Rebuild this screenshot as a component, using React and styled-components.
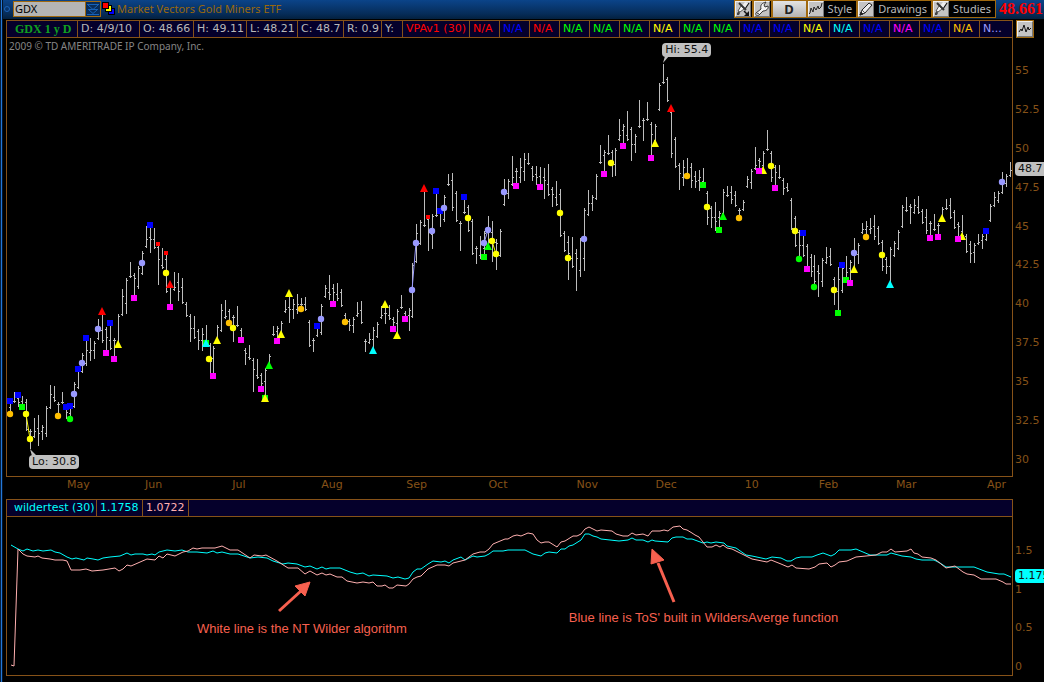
import styled, { createGlobalStyle } from 'styled-components';

const GlobalStyle = createGlobalStyle`
  * {
    box-sizing: border-box;
  }

  body {
    margin: 0;
    background: #000;
    font-family: 'DejaVu Sans', 'Noto Sans', sans-serif;
    font-size: 11px;
    line-height: 16px;
  }

  button, input {
    font: inherit;
  }
`;

const line = '#865218';
const frame = '#a0690f';
const narrow = "'Noto Sans', 'DejaVu Sans', sans-serif";

const Page = styled.div`
  min-height: 100vh;
  padding-left: 3px;
  overflow: hidden;
  background: linear-gradient(90deg, #06203f 1px, #2478d8 1px 2px, #03152c 2px 3px, #000 3px);
`;

const TopBar = styled.header`
  display: flex;
  align-items: flex-start;
  height: 20px;
  overflow: hidden;
  font-family: ${narrow};
  white-space: nowrap;
  background: linear-gradient(#0b4489, #062c58 14px, #03203f 19px, #000 19px);
`;

const LinkDot = styled.span`
  flex: none;
  width: 6px;
  height: 6px;
  margin: 6px 3px 0 1px;
  border: 1px solid #1c62b8;
  border-radius: 50%;
`;

const SymbolBox = styled.div`
  display: flex;
  flex: none;
  height: 16px;
  margin-top: 1px;
  border: 1px solid ${frame};
`;

const SymbolInput = styled.input`
  width: 71px;
  padding: 0 1px;
  border: 0;
  background: #b5b5b5;
  color: #000;
`;

const SymbolArrow = styled.button`
  display: flex;
  width: 15px;
  padding: 0;
  border: 0;
  border-left: 1px solid ${frame};
  background: #072c5a;
`;

const ColorSquares = styled.svg`
  flex: none;
  width: 13px;
  height: 13px;
  margin: 2px 2px 0 1px;
`;

const Company = styled.h1`
  flex: 1;
  margin: 0;
  padding-top: 1px;
  color: #99680c;
  font-size: 11px;
  font-weight: 400;
`;

const Tools = styled.nav`
  display: flex;
  flex: none;
`;

const ToolButton = styled.button`
  display: flex;
  align-items: center;
  gap: 4px;
  height: 18px;
  padding: 0 ${(props) => (props.$wide ? '4px' : '1px')} 0 0;
  border: 1px solid ${frame};
  background: #000;
  color: #b8b8b8;
`;

const PeriodButton = styled.button`
  width: 35px;
  height: 18px;
  padding: 0;
  border: 1px solid ${frame};
  background: linear-gradient(#e4e4e4, #b4b4b4);
  color: #222;
  font-size: 13px;
  font-weight: 700;
  line-height: 14px;
`;

const Price = styled.strong`
  flex: none;
  width: 48px;
  padding-left: 3px;
  color: #f00;
  font-family: 'Liberation Serif', serif;
  font-size: 16px;
  line-height: 18px;
`;

const Workspace = styled.main`
  display: grid;
  grid-template-columns: minmax(0, 1fr) 31px;
  padding-left: 3px;
`;

const Panel = styled.section`
  border: 1px solid ${line};
`;

const CellRow = styled.div`
  display: grid;
  grid-template-columns: ${(props) => props.$columns};
  height: 17px;
  border-bottom: 1px solid ${line};
  background: #05002b;
`;

const Cell = styled.span`
  padding-left: ${(props) => (props.$lead ? '7px' : '3px')};
  border-right: 1px solid ${(props) => (props.$last ? 'transparent' : line)};
  color: ${(props) => props.$color || '#b8b8b8'};
  line-height: 16px;
  white-space: nowrap;
`;

const SymbolCell = styled(Cell)`
  padding-left: 8px;
  color: #10a020;
  font-family: 'Liberation Serif', serif;
  font-size: 12px;
  font-weight: 700;
`;

const Plot = styled.div`
  position: relative;
  height: ${(props) => props.$height}px;
`;

const Drawing = styled.svg`
  display: block;
  width: 100%;
  height: 100%;
`;

const Copyright = styled.p`
  position: absolute;
  top: 0;
  left: 2px;
  margin: 0;
  color: #858585;
  font-family: ${narrow};
  font-size: 10px;
`;

const Bubble = styled.span`
  position: absolute;
  left: ${(props) => props.$left};
  top: ${(props) => props.$top}px;
  height: 14px;
  padding: 0 3px;
  border-radius: 4px;
  background: ${(props) => props.$fill || '#c0c0c0'};
  color: #111;
  line-height: 14px;
  white-space: nowrap;
`;

const Note = styled.p`
  position: absolute;
  left: ${(props) => props.$left};
  top: ${(props) => props.$top}px;
  margin: 0;
  color: #f7604f;
  font-family: 'Liberation Sans', Arial, sans-serif;
  font-size: 13px;
  white-space: nowrap;
`;

const Scale = styled.aside`
  position: relative;
  display: flex;
  flex-direction: column;
  justify-content: space-between;
  overflow: hidden;
  padding: ${(props) => props.$pad};
  color: ${line};
`;

const PriceTag = styled(Bubble)`
  padding-right: 8px;
  border-radius: 4px 0 0 4px;
`;

const PatternButton = styled.button`
  position: absolute;
  top: 0;
  left: 3px;
  display: flex;
  padding: 0;
  border: 1px solid ${frame};
  background: #000;
`;

const Months = styled.div`
  display: grid;
  grid-template-columns: 78fr 87fr 89fr 85fr 82fr 88fr 79fr 89fr 74fr 77fr 91fr 26fr;
  grid-column: 1 / -1;
  height: 22px;
  padding: 0 31px 0 61px;
  color: ${line};
`;

const quotes = ['D: 4/9/10', 'O: 48.66', 'H: 49.11', 'L: 48.21', 'C: 48.7', 'R: 0.9', 'Y:'];

const red = '#f00';
const blue = '#00f';
const green = '#0f0';
const yellow = '#ff0';
const cyan = '#0ff';
const magenta = '#f0f';
const orange = '#ffc000';
const violet = '#9999ff';

const signals = [
  red, blue, red, green, green, green, yellow, green, green,
  blue, blue, yellow, cyan, blue, magenta, blue, orange,
];

const months = ['May', 'Jun', 'Jul', 'Aug', 'Sep', 'Oct', 'Nov', 'Dec', '10', 'Feb', 'Mar', 'Apr'];
const prices = ['55', '52.5', '50', '47.5', '45', '42.5', '40', '37.5', '35', '32.5', '30'];
const ratios = ['1.5', '1', '0.5', '0'];

// high and low of each trading day, as heights on the chart
const days = [
  [401, 413], [392, 403], [395, 407], [396, 407], [399, 431], [429, 449], [418, 438], [415, 446],
  [425, 440], [406, 437], [385, 409], [386, 402], [402, 415], [392, 404], [407, 419], [405, 419],
  [382, 408], [369, 389], [353, 373], [338, 366], [338, 361], [341, 359], [319, 340], [313, 343],
  [327, 353], [323, 350], [338, 359], [314, 346], [289, 316], [278, 314], [262, 278], [273, 298],
  [266, 289], [251, 275], [226, 248], [225, 253], [228, 249], [245, 285], [248, 269], [253, 293],
  [285, 307], [272, 291], [273, 301], [278, 304], [302, 317], [314, 342], [316, 339], [329, 350],
  [328, 351], [325, 343], [343, 373], [346, 376], [325, 343], [304, 332], [300, 319], [309, 323],
  [315, 342], [306, 327], [328, 340], [348, 365], [345, 360], [358, 392], [359, 379], [373, 389],
  [368, 398], [354, 366], [326, 336], [326, 341], [321, 335], [300, 313], [295, 323], [299, 319],
  [294, 314], [298, 309], [297, 311], [320, 347], [338, 352], [326, 337], [304, 335], [285, 298],
  [275, 300], [284, 304], [283, 301], [289, 307], [313, 322], [319, 331], [317, 333], [302, 317],
  [301, 324], [339, 352], [333, 344], [327, 350], [322, 338], [306, 319], [305, 324], [305, 320],
  [317, 329], [309, 335], [295, 309], [311, 319], [308, 331], [263, 318], [224, 263], [220, 245],
  [190, 227], [217, 251], [214, 249], [191, 217], [210, 227], [195, 222], [174, 186], [173, 211],
  [191, 222], [221, 251], [197, 214], [205, 232], [219, 255], [246, 264], [236, 259], [231, 257],
  [216, 247], [221, 262], [239, 270], [229, 257], [179, 206], [179, 199], [156, 186], [168, 186],
  [158, 183], [153, 181], [153, 165], [166, 181], [166, 185], [167, 187], [168, 199], [164, 196],
  [187, 207], [181, 206], [189, 237], [231, 252], [236, 280], [237, 268], [249, 291], [238, 277],
  [208, 271], [190, 216], [195, 211], [174, 200], [145, 164], [150, 174], [135, 155], [150, 177],
  [148, 176], [119, 141], [124, 146], [111, 141], [127, 161], [134, 153], [100, 128], [118, 141],
  [102, 121], [122, 158], [124, 144], [83, 111], [64, 84], [77, 102], [110, 158], [137, 168],
  [163, 190], [160, 186], [158, 176], [163, 188], [171, 188], [170, 191], [168, 185], [191, 225],
  [206, 228], [202, 231], [211, 230], [189, 215], [186, 197], [186, 204], [191, 207], [208, 218],
  [200, 211], [176, 188], [169, 189], [147, 170], [158, 171], [151, 171], [130, 151], [151, 182],
  [165, 188], [165, 179], [178, 195], [183, 192], [198, 230], [216, 247], [230, 259], [233, 257],
  [244, 269], [254, 277], [255, 286], [265, 297], [258, 287], [247, 264], [248, 266], [277, 305],
  [267, 313], [265, 293], [256, 280], [260, 283], [238, 269], [243, 264], [223, 234], [221, 237],
  [218, 234], [215, 240], [226, 245], [240, 271], [257, 274], [247, 284], [241, 257], [230, 250],
  [205, 228], [197, 212], [204, 224], [199, 214], [196, 214], [209, 224], [209, 234], [221, 238],
  [214, 231], [223, 237], [207, 218], [199, 210], [198, 219], [210, 229], [222, 239], [215, 237],
  [234, 253], [241, 263], [243, 263], [234, 245], [234, 249], [231, 241], [204, 222], [192, 207],
  [191, 203], [172, 194], [174, 187], [162, 177],
];

const marks = [
  ['square', blue, 10, 401], ['circle', orange, 10, 414], ['square', blue, 18, 395],
  ['square', green, 22, 407], ['circle', yellow, 26, 414], ['circle', yellow, 30, 439],
  ['circle', orange, 58, 416], ['square', blue, 66, 407], ['square', blue, 70, 406],
  ['circle', green, 70, 419], ['circle', violet, 74, 394], ['square', blue, 78, 369],
  ['circle', violet, 82, 363], ['square', blue, 86, 338], ['circle', violet, 98, 329],
  ['triangle', red, 102, 311], ['square', magenta, 106, 353], ['square', blue, 110, 323],
  ['square', magenta, 114, 359], ['triangle', yellow, 118, 344], ['square', magenta, 134, 298],
  ['circle', violet, 142, 263], ['square', blue, 150, 225], ['dot', red, 158, 244],
  ['dot', red, 166, 253], ['circle', yellow, 166, 273], ['triangle', red, 170, 284],
  ['square', magenta, 170, 307], ['square', green, 206, 343], ['triangle', cyan, 206, 343],
  ['circle', yellow, 209, 359], ['square', magenta, 213, 376], ['triangle', yellow, 217, 340],
  ['circle', orange, 229, 323], ['circle', yellow, 233, 328], ['square', magenta, 241, 340],
  ['square', magenta, 261, 389], ['square', green, 265, 398], ['triangle', yellow, 265, 398],
  ['triangle', green, 269, 365], ['square', magenta, 277, 341], ['triangle', yellow, 281, 334],
  ['triangle', yellow, 289, 293], ['circle', orange, 301, 309], ['square', blue, 317, 326],
  ['circle', violet, 321, 319], ['square', magenta, 333, 304], ['circle', orange, 345, 322],
  ['triangle', cyan, 373, 350], ['triangle', yellow, 385, 304], ['square', magenta, 393, 329],
  ['triangle', yellow, 397, 335], ['square', magenta, 405, 319], ['circle', violet, 412, 290],
  ['circle', violet, 416, 243], ['triangle', red, 424, 188], ['dot', red, 428, 217],
  ['circle', violet, 432, 231], ['square', blue, 436, 191], ['square', blue, 440, 211],
  ['circle', violet, 444, 208], ['square', blue, 464, 197], ['circle', yellow, 468, 218],
  ['circle', violet, 484, 243], ['circle', violet, 488, 230], ['triangle', green, 488, 246],
  ['square', green, 484, 257], ['circle', yellow, 492, 241], ['circle', yellow, 496, 254],
  ['circle', violet, 504, 192], ['square', magenta, 516, 186], ['square', magenta, 540, 187],
  ['circle', yellow, 560, 213], ['circle', yellow, 568, 258], ['circle', violet, 584, 239],
  ['square', magenta, 604, 174], ['circle', yellow, 611, 163], ['square', magenta, 623, 146],
  ['square', magenta, 651, 158], ['triangle', yellow, 655, 143], ['triangle', red, 671, 108],
  ['circle', orange, 687, 176], ['square', green, 703, 185], ['circle', yellow, 707, 207],
  ['triangle', green, 723, 216], ['square', green, 719, 230], ['circle', orange, 739, 218],
  ['triangle', yellow, 763, 170], ['square', magenta, 759, 171], ['circle', yellow, 771, 166],
  ['square', magenta, 775, 188], ['circle', yellow, 795, 231], ['square', blue, 803, 233],
  ['circle', green, 799, 259], ['square', magenta, 807, 269], ['circle', green, 814, 287],
  ['circle', yellow, 834, 290], ['square', green, 838, 313], ['square', blue, 842, 265],
  ['square', green, 846, 280], ['square', magenta, 850, 283], ['circle', violet, 854, 253],
  ['triangle', yellow, 854, 269], ['circle', orange, 866, 237], ['circle', yellow, 882, 255],
  ['triangle', cyan, 890, 284], ['square', magenta, 930, 238], ['square', magenta, 938, 237],
  ['triangle', yellow, 942, 218], ['triangle', yellow, 962, 236], ['square', magenta, 958, 239],
  ['square', blue, 986, 231], ['circle', violet, 1002, 182],
];

const links = [
  [yellow, 26, 414, 30, 439],
  [violet, 412, 290, 416, 243],
  [violet, 484, 243, 488, 230],
  [yellow, 492, 241, 496, 254],
];

const wilders = `11,545 18,549 23,551 27,549 33,551 38,550 43,551 51,550 55,552 60,553 67,557 72,559 76,558
  80,559 84,560 87,558 93,559 98,560 103,558 110,557 120,556 127,553 131,555 135,554 143,554 147,555
  152,554 155,555 159,552 167,550 175,551 182,550 188,552 197,552 207,553 213,551 217,553 222,552
  230,554 238,554 250,558 258,557 267,558 273,561 283,564 288,563 297,564 305,567 310,566 317,569
  322,567 326,569 330,568 340,568 350,572 357,574 363,573 369,576 373,575 387,576 393,578 398,577
  405,579 409,578 413,572 417,569 421,569 428,564 433,561 441,562 445,561 449,563 453,560 461,557
  465,560 473,556 477,557 485,556 489,554 493,551 503,551 508,550 525,550 533,554 541,556 545,553
  549,552 557,553 561,549 565,549 569,546 573,545 581,540 585,534 589,534 593,536 597,537 601,539
  619,541 628,540 632,538 636,540 643,540 648,542 652,540 655,541 668,542 672,538 676,537 683,537
  687,539 692,539 703,543 707,542 711,543 716,542 724,543 727,546 736,548 746,555 752,556 766,559
  772,557 781,558 787,561 791,561 796,558 801,557 812,557 817,555 823,553 831,556 835,554 839,550
  851,550 856,549 870,555 882,555 887,555 891,553 902,556 911,557 916,559 922,560 934,560 940,563
  946,567 974,567 987,572 999,574 1004,574 1011,577`;

const ntWilder = `11,665 14,666 18,549 23,554 27,556 35,557 38,556 42,558 50,559 55,560 63,560 67,561 71,570
  80,570 86,569 92,571 103,570 115,568 119,571 123,569 127,565 131,566 147,559 155,560 159,556 163,558
  167,554 175,556 183,552 188,551 193,548 197,549 202,548 215,548 222,546 230,550 238,550 250,558
  254,555 262,556 266,555 277,561 288,568 298,568 305,574 310,571 317,575 322,573 326,575 330,574
  337,577 342,577 347,581 357,583 363,582 369,583 373,582 377,586 382,586 385,585 389,588 393,588
  397,585 406,586 409,584 413,579 417,577 421,576 428,569 437,565 445,565 449,566 453,563 465,560
  473,554 480,552 485,552 489,549 493,544 505,539 508,539 513,536 517,535 521,536 528,533 533,534
  537,540 541,543 545,542 549,542 557,547 561,542 565,541 573,536 577,536 581,534 585,529 589,527
  597,531 601,530 612,531 616,534 623,536 628,536 632,533 636,535 643,534 648,536 652,531 660,531
  664,530 668,531 673,527 680,526 683,529 687,530 692,533 695,535 699,537 707,547 712,547 716,545
  720,547 723,545 727,548 732,549 740,553 752,559 767,562 771,560 776,562 781,564 788,567 792,565
  796,568 809,569 815,567 819,564 827,563 831,567 835,565 839,562 847,561 856,557 876,555 882,552
  887,552 891,549 895,552 907,551 911,549 914,553 918,554 922,557 931,558 936,560 946,568 955,566
  959,569 963,572 967,574 974,575 981,579 996,579 1003,582 1006,584 1011,584`;

// the calendar loses one pixel about every fifty days
const dayX = (i) => 10 + 4 * i - Math.floor(i / 50.4);

const tickY = (day, neighbour) => {
  const middle = Math.round((neighbour[0] + neighbour[1]) / 2);
  return Math.max(day[0] + 2, Math.min(day[1] - 2, middle));
};

const Bars = () => (
  <g fill="#bdbdbd">
    {days.map((day, i) => {
      const x = dayX(i);
      return (
        <g key={x}>
          <rect x={x} y={day[0]} width="1" height={day[1] - day[0]} />
          <rect x={x - 1} y={tickY(day, days[i - 1] || day)} width="1" height="1" />
          <rect x={x + 1} y={tickY(day, days[i + 1] || day)} width="1" height="1" />
        </g>
      );
    })}
  </g>
);

const Mark = ({ shape, color, x, y }) => {
  if (shape === 'square') {
    return <rect x={x - 3} y={y - 3} width="6" height="6" fill={color} />;
  }
  if (shape === 'dot') {
    return <rect x={x - 2} y={y - 2} width="4" height="4" fill={color} />;
  }
  if (shape === 'circle') {
    return <circle cx={x} cy={y} r="3.2" fill={color} />;
  }
  return <path d={`M${x} ${y - 4}L${x + 4} ${y + 4}H${x - 4}Z`} fill={color} />;
};

const IconTile = ({ children }) => (
  <svg width="16" height="16" viewBox="0 0 16 16" aria-hidden="true">
    <rect width="16" height="16" fill="#eee" />
    <path d="M16 0V16H0L1 15H15V1Z" fill="#777" />
    <rect x="1" y="1" width="14" height="14" fill="#c4c4c4" />
    {children}
  </svg>
);

const DropperShape = () => (
  <>
    <path d="M10 1L14 2L13 5L10 8L7 5Z" fill="#eee" />
    <path d="M14 2L10 8" stroke="#111" strokeWidth="1.2" />
    <path d="M4 2L11 9" stroke="#333" strokeWidth="2" />
    <path d="M6 5L9 8L5 11L3 10Z" fill="#f4f4f4" stroke="#333" strokeWidth="0.8" />
    <path d="M4 10L2 12V14H4L5 12Z" fill="#444" />
  </>
);

const StudyIcon = () => (
  <IconTile>
    <DropperShape />
  </IconTile>
);

const EditStudyIcon = () => (
  <IconTile>
    <DropperShape />
    <path d="M9 10L12 13" stroke="#111" strokeWidth="1.5" />
    <path d="M14 10V15H9Z" fill="#111" />
  </IconTile>
);

const WrenchIcon = () => (
  <IconTile>
    <path
      d="M2 12L7 8C6 4 8 2 12 1L10 4L11 6L14 5C15 8 12 10 9 10L5 14C3 15 1 14 2 12Z"
      fill="#f2f2f2"
      stroke="#333"
    />
    <circle cx="4" cy="12.5" r="0.8" fill="#333" />
  </IconTile>
);

const StyleIcon = () => (
  <IconTile>
    <path d="M1 13L2 12L3 7L5 11L6 6L8 9L10 5L11 8L13 6L14 2" fill="none" stroke="#222" />
  </IconTile>
);

const PencilIcon = () => (
  <IconTile>
    <path d="M2 14L4 9L11 2L14 4L7 12Z" fill="#eee" stroke="#222" />
    <path d="M2 14L3 11L5 13Z" fill="#222" stroke="#222" />
    <path d="M4 9L7 12" stroke="#555" />
  </IconTile>
);

const PatternIcon = () => (
  <IconTile>
    <path d="M2 11L4 8L5 10L7 4L9 11L11 6L12 9L14 7" fill="none" stroke="#111" />
  </IconTile>
);

const App = () => {
  return (
    <>
      <GlobalStyle />
      <Page>
        <TopBar>
          <LinkDot />
          <SymbolBox>
            <SymbolInput aria-label="Symbol" defaultValue="GDX" />
            <SymbolArrow aria-label="Choose symbol">
              <svg width="14" height="14" viewBox="0 0 14 14" aria-hidden="true">
                <path
                  d="M1 2.5H13M2 3L7 7.5L12 3M2 7.5H12M3 8L7 11.5L11 8M1 12.5H13"
                  fill="none"
                  stroke="#1762b8"
                />
              </svg>
            </SymbolArrow>
          </SymbolBox>
          <ColorSquares viewBox="0 0 13 13" aria-hidden="true">
            <rect x="6" y="6" width="7" height="7" />
            <rect x="7" y="7" width="5" height="5" fill="#00f" />
            <rect x="3" y="3" width="7" height="7" />
            <rect x="4" y="4" width="5" height="5" fill="#ff0" />
            <rect width="7" height="7" />
            <rect x="1" y="1" width="5" height="5" fill="#f00" />
          </ColorSquares>
          <Company>Market Vectors Gold Miners ETF</Company>
          <Tools>
            <ToolButton aria-label="Edit studies"><EditStudyIcon /></ToolButton>
            <ToolButton aria-label="Settings"><WrenchIcon /></ToolButton>
            <PeriodButton>D</PeriodButton>
            <ToolButton $wide><StyleIcon />Style</ToolButton>
            <ToolButton $wide><PencilIcon />Drawings</ToolButton>
            <ToolButton $wide><StudyIcon />Studies</ToolButton>
          </Tools>
          <Price>48.661</Price>
        </TopBar>
        <Workspace>
          <Panel>
            <CellRow $columns="71px 62px 54px 53px 51px 46px 38px 21px 67px repeat(17, 30px) 1fr">
              <SymbolCell as="strong">GDX 1 y D</SymbolCell>
              {quotes.map((quote) => (
                <Cell key={quote}>{quote}</Cell>
              ))}
              <Cell $color={red}>VPAv1 (30)</Cell>
              {signals.map((color, i) => (
                <Cell key={i} $color={color}>N/A</Cell>
              ))}
              <Cell $color={violet} $last>N...</Cell>
            </CellRow>
            <Plot $height={438}>
              <Drawing viewBox="7 38 1005 438" preserveAspectRatio="none" role="img" aria-label="Price">
                <g shapeRendering="crispEdges">
                  <Bars />
                </g>
                {links.map(([color, x1, y1, x2, y2]) => (
                  <line key={x1} x1={x1} y1={y1} x2={x2} y2={y2} stroke={color} />
                ))}
                {marks.map(([shape, color, x, y], i) => (
                  <Mark key={i} shape={shape} color={color} x={x} y={y} />
                ))}
                <path d="M663 63L665 56H669ZM30 449L32 456H37Z" fill="#c0c0c0" />
              </Drawing>
              <Copyright>2009 © TD AMERITRADE IP Company, Inc.</Copyright>
              <Bubble $left="65.2%" $top={5}>Hi: 55.4</Bubble>
              <Bubble $left="2.2%" $top={417}>Lo: 30.8</Bubble>
            </Plot>
          </Panel>
          <Scale $pad="43px 0 9px 2px">
            <PatternButton aria-label="Patterns"><PatternIcon /></PatternButton>
            {prices.map((price) => (
              <span key={price}>{price}</span>
            ))}
            <PriceTag $left="2px" $top={142}>48.7</PriceTag>
          </Scale>
          <Months>
            {months.map((month) => (
              <span key={month}>{month}</span>
            ))}
          </Months>
          <Panel>
            <CellRow $columns="90px 46px 46px 1fr">
              <Cell $lead $color={cyan}>wildertest (30)</Cell>
              <Cell $color={cyan}>1.1758</Cell>
              <Cell $color="#ffb0b0">1.0722</Cell>
            </CellRow>
            <Plot $height={158}>
              <Drawing viewBox="7 517 1005 158" preserveAspectRatio="none" role="img" aria-label="Wilder averages">
                <g fill="none">
                  <polyline points={wilders} stroke="#0ff" />
                  <polyline points={ntWilder} stroke="#ffb0b0" />
                </g>
                <g fill="#f7604f" stroke="#f7604f">
                  <path d="M279 611L302 590" strokeWidth="3" />
                  <path d="M310 582L305 596L295 586Z" />
                  <path d="M674 602L658 563" strokeWidth="3" />
                  <path d="M652 549L664 560L651 564Z" />
                </g>
              </Drawing>
              <Note $left="18.9%" $top={104}>White line is the NT Wilder algorithm</Note>
              <Note $left="55.9%" $top={93}>Blue line is ToS' built in WildersAverge function</Note>
            </Plot>
          </Panel>
          <Scale $pad="44px 0 1px 2px">
            {ratios.map((ratio) => (
              <span key={ratio}>{ratio}</span>
            ))}
            <PriceTag $left="2px" $top={70} $fill={cyan}>1.1758</PriceTag>
          </Scale>
        </Workspace>
      </Page>
    </>
  );
};

export default App;
